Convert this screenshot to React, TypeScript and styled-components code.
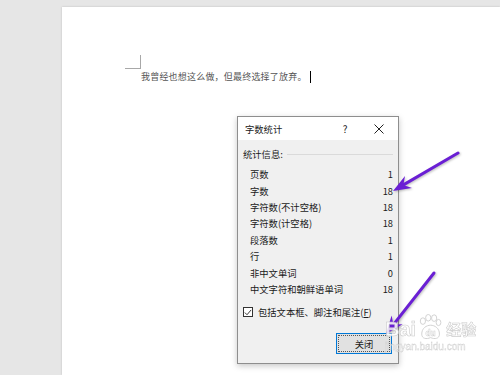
import React from "react";
import styled, { createGlobalStyle } from "styled-components";

interface Stat {
  label: string;
  value: number;
}

const stats: Stat[] = [
  { label: "页数", value: 1 },
  { label: "字数", value: 18 },
  { label: "字符数(不计空格)", value: 18 },
  { label: "字符数(计空格)", value: 18 },
  { label: "段落数", value: 1 },
  { label: "行", value: 1 },
  { label: "非中文单词", value: 0 },
  { label: "中文字符和朝鲜语单词", value: 18 },
];

const App = () => {
  return (
    <>
      <GlobalStyle />
      <Workspace>
        <Page>
          <Paragraph>
            我曾经也想这么做，但最终选择了放弃。
            <Caret />
          </Paragraph>

          <Dialog>
            <TitleBar>
              <Title>字数统计</Title>
              <TitleButton width={30}>?</TitleButton>
              <TitleButton width={38}>
                <svg width="10" height="10" viewBox="0 0 10 10">
                  <path d="M0.5 0.5 L9.5 9.5 M9.5 0.5 L0.5 9.5" stroke="#222" strokeWidth="1" fill="none" />
                </svg>
              </TitleButton>
            </TitleBar>

            <Body>
              <SectionHeader>
                <span>统计信息:</span>
                <Rule />
              </SectionHeader>

              <StatList>
                {stats.map(stat => (
                  <StatRow key={stat.label}>
                    <span>{stat.label}</span>
                    <span>{stat.value}</span>
                  </StatRow>
                ))}
              </StatList>

              <CheckRow>
                <CheckBox>
                  <svg width="9" height="9" viewBox="0 0 9 9">
                    <path d="M1 4.6 L3.4 7 L8 1.6" stroke="#222" strokeWidth="1" fill="none" />
                  </svg>
                </CheckBox>
                <span>
                  包括文本框、脚注和尾注(<u>F</u>)
                </span>
              </CheckRow>

              <Footer>
                <CloseButton>
                  <FocusRing>关闭</FocusRing>
                </CloseButton>
              </Footer>
            </Body>
          </Dialog>
        </Page>

        <Arrows width="500" height="375" viewBox="0 0 500 375">
          <Arrow
            tail="458,153"
            notch="403.4,184.9"
            head="393,191 405,176 403.4,184.9 412,188"
          />
          <Arrow
            tail="434,273"
            notch="393.4,324.6"
            head="386,334 391.6,315.6 393.4,324.6 402.6,324.2"
          />
        </Arrows>

        <Watermark>
          <Brand>
            <span>Bai</span>
            <svg width="26" height="26" viewBox="0 0 22 22">
              <g fill="#fff" stroke="#c8c8c8" strokeWidth="0.8">
                <ellipse cx="5" cy="6" rx="2.2" ry="2.8" />
                <ellipse cx="9.5" cy="3.2" rx="2.2" ry="2.8" />
                <ellipse cx="14.5" cy="3.5" rx="2.2" ry="2.8" />
                <ellipse cx="18.2" cy="7.2" rx="2" ry="2.6" />
                <path d="M4 17 C4 12 8 9.5 11.5 9.5 C15 9.5 19 12 19 17 C19 21 15 21.5 11.5 20 C8 21.5 4 21 4 17 Z" />
              </g>
              <text x="11.5" y="18.5" fontSize="7" fontFamily="Liberation Sans, sans-serif" fontWeight="bold" textAnchor="middle" fill="#fff" stroke="#c8c8c8" strokeWidth="0.4">du</text>
            </svg>
            <BrandCn>经验</BrandCn>
          </Brand>
          <Domain>jingyan.baidu.com</Domain>
        </Watermark>
      </Workspace>
    </>
  );
};

interface ArrowProps {
  tail: string;
  notch: string;
  head: string;
}

const Arrow = ({ tail, notch, head }: ArrowProps) => {
  const [tx, ty] = tail.split(",");
  const [nx, ny] = notch.split(",");

  return (
    <g>
      <line x1={tx} y1={ty} x2={nx} y2={ny} stroke="#6a1fd4" strokeWidth="3" strokeLinecap="round" />
      <polygon points={head} fill="#6a1fd4" />
    </g>
  );
};

const GlobalStyle = createGlobalStyle`
  body {
    margin: 0;
    font-family: "Noto Sans CJK SC", "Liberation Sans", sans-serif;
  }
`;

const Workspace = styled.div`
  position: relative;
  display: flex;
  box-sizing: border-box;
  width: 500px;
  height: 375px;
  padding: 7px 0 0 62px;
  overflow: hidden;
  background-color: #e6e6e6;
`;

const Page = styled.div`
  position: relative;
  flex: 1;
  background-color: #ffffff;
  box-shadow: 0 0 2px rgba(0, 0, 0, 0.18);
`;

const Paragraph = styled.div`
  position: relative;
  display: flex;
  align-items: center;
  margin: 64px 0 0 79px;
  font-size: 9px;
  line-height: 12px;
  letter-spacing: 0.2px;
  color: #555555;

  &::before {
    content: "";
    position: absolute;
    left: -16px;
    top: -16px;
    width: 15px;
    height: 13px;
    border-right: 1px solid #a8a8a8;
    border-bottom: 1px solid #a8a8a8;
  }
`;

const Caret = styled.span`
  display: inline-block;
  width: 1px;
  height: 12px;
  margin-left: 3px;
  background-color: #000000;
`;

const Dialog = styled.div`
  position: absolute;
  left: 175px;
  top: 109px;
  display: flex;
  flex-direction: column;
  box-sizing: border-box;
  width: 162px;
  height: 248px;
  border: 1px solid #8e8e8e;
  background-color: #f0f0f0;
  box-shadow: 0 2px 6px rgba(0, 0, 0, 0.22);
  font-size: 9.3px;
  color: #1a1a1a;
`;

const TitleBar = styled.div`
  display: flex;
  align-items: center;
  height: 23px;
  padding-left: 7px;
  background-color: #ffffff;
`;

const Title = styled.div`
  flex: 1;
`;

const TitleButton = styled.div<{ width: number }>`
  display: flex;
  justify-content: center;
  align-items: center;
  width: ${({ width }) => width}px;
  height: 23px;
  font-size: 10px;
`;

const Body = styled.div`
  display: flex;
  flex-direction: column;
  flex: 1;
  padding: 6px 5px 0 5px;
`;

const SectionHeader = styled.div`
  display: flex;
  align-items: center;
  gap: 4px;
  height: 16px;
`;

const Rule = styled.div`
  flex: 1;
  height: 1px;
  background-color: #dadada;
`;

const StatList = styled.div`
  display: flex;
  flex-direction: column;
  margin-top: 4px;
  padding-left: 7px;
`;

const StatRow = styled.div`
  display: flex;
  justify-content: space-between;
  align-items: center;
  height: 16.4px;
`;

const CheckRow = styled.div`
  display: flex;
  align-items: center;
  gap: 5px;
  height: 16px;
  margin-top: 7px;
`;

const CheckBox = styled.div`
  display: flex;
  justify-content: center;
  align-items: center;
  box-sizing: border-box;
  width: 10px;
  height: 10px;
  border: 1px solid #333333;
  background-color: #ffffff;
`;

const Footer = styled.div`
  display: flex;
  justify-content: flex-end;
  margin-top: 13px;
  padding-right: 1px;
`;

const CloseButton = styled.div`
  box-sizing: border-box;
  width: 56px;
  height: 21px;
  padding: 1px;
  border: 1px solid #0078d7;
  background-color: #e1e1e1;
`;

const FocusRing = styled.div`
  display: flex;
  justify-content: center;
  align-items: center;
  box-sizing: border-box;
  height: 100%;
  border: 1px dotted #555555;
`;

const Arrows = styled.svg`
  position: absolute;
  left: 0;
  top: 0;
  filter: drop-shadow(1px 1px 1px rgba(0, 0, 0, 0.25));
  pointer-events: none;
`;

const Watermark = styled.div`
  position: absolute;
  left: 385px;
  top: 314px;
  display: flex;
  flex-direction: column;
  align-items: flex-start;
  opacity: 0.85;
  pointer-events: none;
`;

const Brand = styled.div`
  display: flex;
  align-items: flex-end;
  gap: 1px;
  font-family: "Liberation Sans", sans-serif;
  font-weight: bold;
  font-size: 20px;
  line-height: 22px;
  color: #ffffff;
  -webkit-text-stroke: 0.6px #c4c4c4;
`;

const BrandCn = styled.span`
  margin-left: 2px;
  font-family: "Noto Sans CJK SC", sans-serif;
  font-size: 15px;
`;

const Domain = styled.div`
  margin-top: 1px;
  font-family: "Liberation Sans", sans-serif;
  font-size: 10px;
  line-height: 12px;
  color: #ffffff;
  -webkit-text-stroke: 0.4px #c4c4c4;
`;

export default App;
